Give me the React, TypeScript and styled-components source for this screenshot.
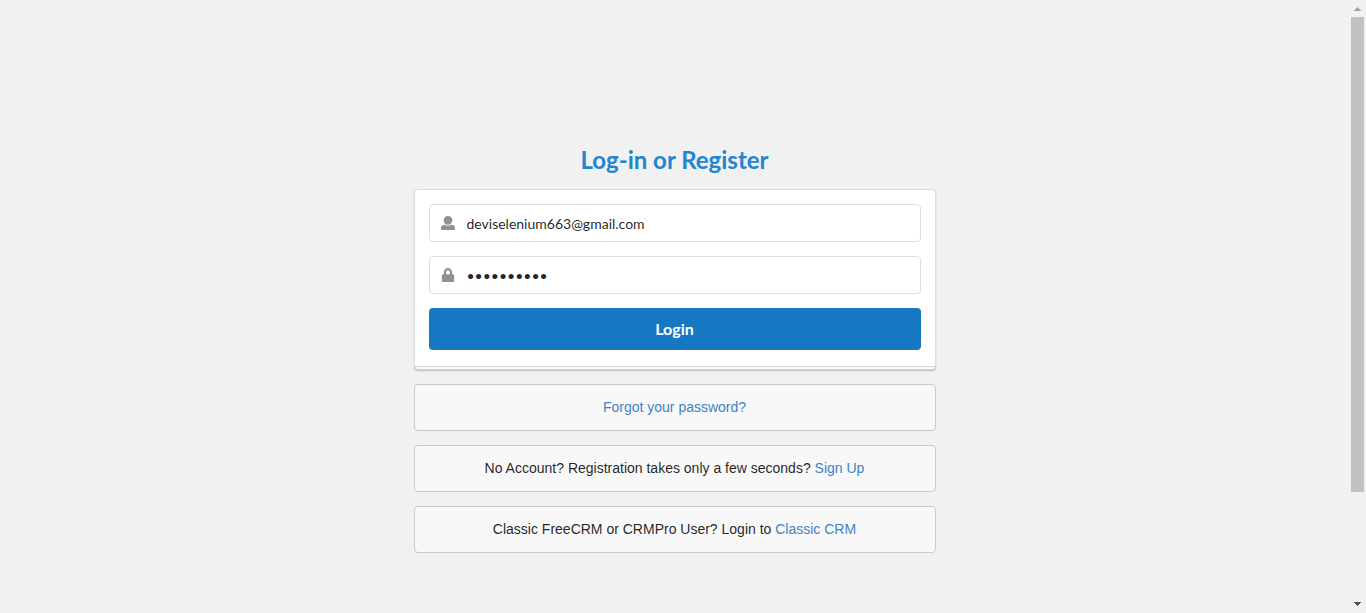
import React from "react";
import styled, { createGlobalStyle } from "styled-components";

const GlobalStyle = createGlobalStyle`
  *, *::before, *::after { box-sizing: border-box; }
  body {
    margin: 0;
    background: #f1f1f1;
    color: rgba(0, 0, 0, 0.87);
    font-family: "Liberation Sans", Arial, sans-serif;
    font-size: 14px;
    line-height: 20px;
  }
`;

const Page = styled.div`
  display: flex;
  min-height: 100vh;
`;

const Main = styled.main`
  flex: 1;
  display: flex;
  justify-content: center;
  padding: 145px 16px 60px;
`;

const Column = styled.div`
  width: 100%;
  max-width: 522px;
  display: flex;
  flex-direction: column;
  gap: 14px;
`;

const Title = styled.h1`
  margin: 0;
  color: #2185d0;
  font: 700 24px/30px Lato, sans-serif;
  text-align: center;
`;

const Card = styled.form`
  position: relative;
  display: flex;
  flex-direction: column;
  gap: 14px;
  padding: 14px 14px 19px;
  background: #fff;
  border: 1px solid #dededf;
  border-radius: 4px;
  box-shadow: 0 1px 2px rgba(34, 36, 38, 0.15);

  &::after {
    content: "";
    position: absolute;
    left: -1px;
    right: -1px;
    bottom: -2px;
    height: 5px;
    background: rgba(0, 0, 0, 0.03);
    border-top: 1px solid rgba(34, 36, 38, 0.15);
    border-bottom: 1px solid rgba(34, 36, 38, 0.1);
    border-radius: 0 0 4px 4px;
  }
`;

const Field = styled.label`
  display: flex;
  align-items: center;
  height: 38px;
  padding: 0 11px;
  gap: 12px;
  background: #fff;
  border: 1px solid #dededf;
  border-radius: 4px;
`;

const FieldIcon = styled.svg`
  flex: none;
  width: 14px;
  height: 14px;
  fill: #919191;
`;

const Input = styled.input`
  flex: 1;
  min-width: 0;
  height: 36px;
  padding: 1px 0 0;
  border: 0;
  outline: 0;
  background: transparent;
  color: rgba(0, 0, 0, 0.87);
  font: 400 14px/17px Lato, sans-serif;
`;

const LoginButton = styled.button`
  height: 42px;
  padding: 0;
  border: 0;
  border-radius: 4px;
  background: #1678c2;
  color: #fff;
  font: 700 16px/16px Lato, sans-serif;
  cursor: pointer;
`;

const Message = styled.div`
  padding: 12px 20px 13px;
  background: #f8f8f9;
  border: 1px solid #c9caca;
  border-radius: 4px;
  text-align: center;
`;

const Link = styled.a`
  color: #4183c4;
  text-decoration: none;
`;

const ScrollTrack = styled.div`
  flex: none;
  width: 17px;
  display: flex;
  flex-direction: column;
  background: #f1f1f1;
`;

const ScrollRail = styled.div`
  flex: 1;
  padding: 0 2px;
`;

const ScrollThumb = styled.div`
  height: 82%;
  background: #c1c1c1;
`;

const ScrollArrow = styled.svg<{ $color: string }>`
  flex: none;
  display: block;
  width: 17px;
  height: 17px;
  fill: ${(p) => p.$color};
  shape-rendering: crispEdges;
`;

export default function App() {
  return (
    <>
      <GlobalStyle />
      <Page>
        <Main>
          <Column>
            <Title>Log-in or Register</Title>
            <Card onSubmit={(e) => e.preventDefault()}>
              <Field>
                <FieldIcon viewBox="0 0 512 512" aria-hidden="true">
                  <path d="M256 0c88.366 0 160 71.634 160 160s-71.634 160-160 160S96 248.366 96 160 167.634 0 256 0zm183.283 333.821l-71.313-17.828c-74.923 53.89-165.738 41.864-223.94 0l-71.313 17.828C29.981 344.505 0 382.903 0 426.955V464c0 26.51 21.49 48 48 48h416c26.51 0 48-21.49 48-48v-37.045c0-44.052-29.981-82.45-72.717-93.134z" />
                </FieldIcon>
                <Input type="text" name="email" aria-label="E-mail address" defaultValue="deviselenium663@gmail.com" />
              </Field>
              <Field>
                <FieldIcon viewBox="0 0 448 512" aria-hidden="true">
                  <path d="M400 224h-24v-72C376 68.2 307.8 0 224 0S72 68.2 72 152v72H48c-26.500 0-48 21.500-48 48v192c0 26.500 21.500 48 48 48h352c26.500 0 48-21.500 48-48V272c0-26.500-21.500-48-48-48zm-104 0H152v-72c0-39.700 32.300-72 72-72s72 32.300 72 72v72z" />
                </FieldIcon>
                <Input type="password" name="password" aria-label="Password" defaultValue="selenium66" />
              </Field>
              <LoginButton type="submit">Login</LoginButton>
            </Card>
            <Message>
              <Link href="#forgot">Forgot your password?</Link>
            </Message>
            <Message>
              No Account? Registration takes only a few seconds? <Link href="#register">Sign Up</Link>
            </Message>
            <Message>
              Classic FreeCRM or CRMPro User? Login to <Link href="#classic">Classic CRM</Link>
            </Message>
          </Column>
        </Main>
        <ScrollTrack aria-hidden="true">
          <ScrollArrow $color="#a3a3a3" viewBox="0 0 17 17">
            <path d="M8 7h1v1h1v1h1v1h1v1H5v-1h1V9h1V8h1z" />
          </ScrollArrow>
          <ScrollRail>
            <ScrollThumb />
          </ScrollRail>
          <ScrollArrow $color="#505050" viewBox="0 0 17 17">
            <path d="M5 6h7v1h-1v1h-1v1H9v1H8V9H7V8H6V7H5z" />
          </ScrollArrow>
        </ScrollTrack>
      </Page>
    </>
  );
}
